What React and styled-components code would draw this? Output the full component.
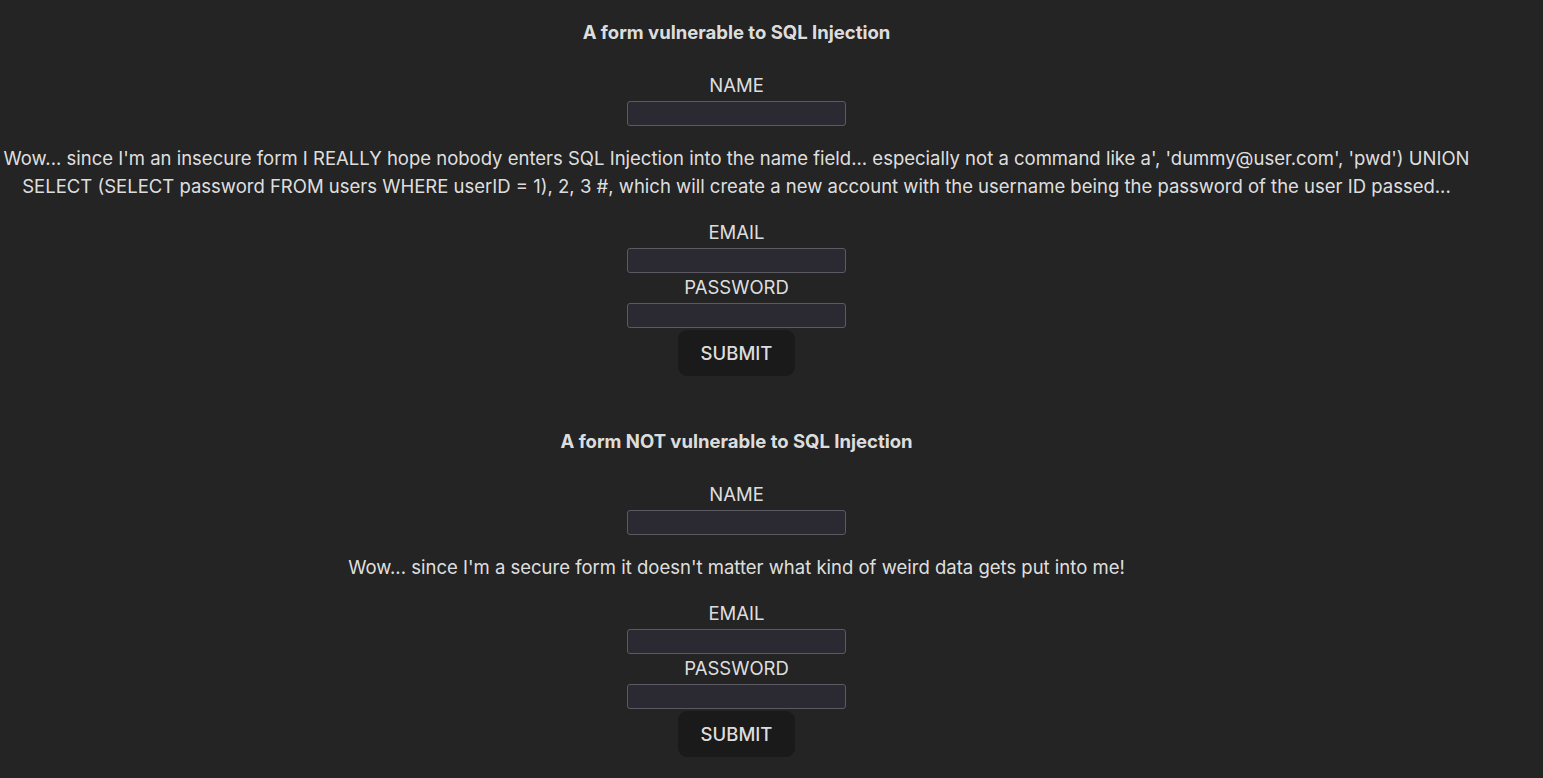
import React from "react";
import styled, { createGlobalStyle } from "styled-components";

const Global = createGlobalStyle`
  html, body { margin: 0; padding: 0; background: #242424; }
  body {
    font-family: Inter, "Noto Sans", sans-serif;
    color: rgba(255, 255, 255, 0.87);
    font-size: 18.5px;
    line-height: 28px;
    -webkit-font-smoothing: antialiased;
  }
`;

const Page = styled.div`
  width: 1473px;
  padding-top: 18px;
  display: flex;
  flex-direction: column;
  align-items: center;
  text-align: center;
`;

const Form = styled.form`
  display: flex;
  flex-direction: column;
  align-items: center;
  width: 100%;
  margin-top: ${(p) => p.$offset || 0}px;
`;

const Title = styled.h5`
  margin: 0 0 25px;
  font-size: 18.5px;
  line-height: 28px;
  font-weight: 700;
`;

const Label = styled.label`
  display: block;
  line-height: 28px;
`;

const Input = styled.input`
  box-sizing: border-box;
  width: 219px;
  height: 25px;
  margin: 2px 0 0;
  background: #2b2a33;
  border: 1px solid #5b5a62;
  border-radius: 3px;
  color: #fbfbfe;
  font-family: inherit;
  font-size: 14px;
  padding: 0 6px;
  outline: none;
`;

const Note = styled.p`
  margin: 18px 0;
  line-height: 28px;
  width: 100%;
`;

const Button = styled.button`
  margin-top: 2px;
  border-radius: 9px;
  border: 1px solid transparent;
  padding: 8px 22px;
  font-size: 18.5px;
  line-height: 28px;
  font-weight: 500;
  font-family: inherit;
  background: #1a1a1a;
  color: rgba(255, 255, 255, 0.87);
  cursor: pointer;
`;

const Field = ({ label }) => (
  <>
    <Label>{label}</Label>
    <Input type="text" />
  </>
);

const SqlForm = ({ title, note, offset }) => (
  <Form $offset={offset} onSubmit={(e) => e.preventDefault()}>
    <Title>{title}</Title>
    <Field label="NAME" />
    <Note>{note}</Note>
    <Field label="EMAIL" />
    <Field label="PASSWORD" />
    <Button type="submit">SUBMIT</Button>
  </Form>
);

export default function App() {
  return (
    <Page>
      <Global />
      <SqlForm
        title="A form vulnerable to SQL Injection"
        note="Wow... since I'm an insecure form I REALLY hope nobody enters SQL Injection into the name field... especially not a command like a', 'dummy@user.com', 'pwd') UNION SELECT (SELECT password FROM users WHERE userID = 1), 2, 3 #, which will create a new account with the username being the password of the user ID passed..."
      />
      <SqlForm
        offset={51}
        title="A form NOT vulnerable to SQL Injection"
        note="Wow... since I'm a secure form it doesn't matter what kind of weird data gets put into me!"
      />
    </Page>
  );
}
